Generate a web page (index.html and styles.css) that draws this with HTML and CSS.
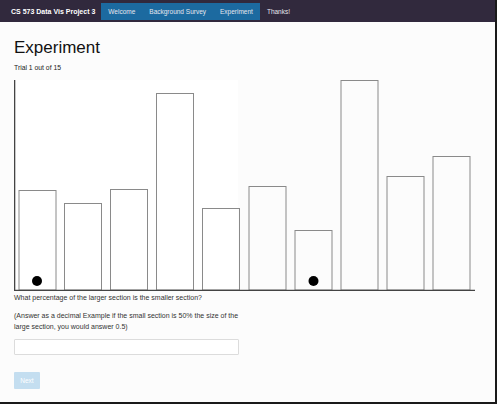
FILE: index.html
```html
<!DOCTYPE html>
<html>
<head>
<meta charset="utf-8">
<title>Experiment</title>
<link rel="stylesheet" href="styles.css">
</head>
<body>
<div class="frame">
  <nav class="navbar">
    <span class="brand">CS 573 Data Vis Project 3</span>
    <div class="nav-group">
      <a class="nav-link">Welcome</a>
      <a class="nav-link">Background Survey</a>
      <a class="nav-link">Experiment</a>
    </div>
    <a class="nav-link">Thanks!</a>
  </nav>
  <main class="content">
    <h1 class="title">Experiment</h1>
    <p class="trial">Trial 1 out of 15</p>
    <svg class="chart" width="462" height="211" viewBox="0 0 462 211">
      <rect x="0" y="0" width="224" height="210" fill="#ffffff"/>
      <g fill="none" stroke="#8a8a8a" stroke-width="1">
        <rect x="5" y="110.5" width="37" height="99.5"/>
        <rect x="50.5" y="123.5" width="37" height="86.5"/>
        <rect x="96.5" y="109.5" width="37" height="100.5"/>
        <rect x="142.5" y="13.5" width="37" height="196.5"/>
        <rect x="188.5" y="128.5" width="37" height="81.5"/>
        <rect x="235" y="106.5" width="37" height="103.5"/>
        <rect x="281" y="150.5" width="37" height="59.5"/>
        <rect x="327" y="0.5" width="37" height="209.5"/>
        <rect x="373" y="96.5" width="37" height="113.5"/>
        <rect x="419" y="76.5" width="37" height="133.5"/>
      </g>
      <g stroke="#444" stroke-width="1.3" fill="none">
        <line x1="0.65" y1="0" x2="0.65" y2="210.5"/>
        <line x1="0" y1="210.35" x2="461" y2="210.35"/>
      </g>
      <circle cx="23" cy="201" r="5" fill="#000"/>
      <circle cx="299.5" cy="201" r="5" fill="#000"/>
    </svg>
    <p class="question">What percentage of the larger section is the smaller section?</p>
    <p class="hint">(Answer as a decimal Example if the small section is 50% the size of the large section, you would answer 0.5)</p>
    <input class="answer" type="text">
    <button class="next" disabled>Next</button>
  </main>
</div>
</body>
</html>
```

FILE: styles.css
```css
html, body {
  margin: 0;
  padding: 0;
}
body {
  width: 497px;
  height: 404px;
  overflow: hidden;
  font-family: "Liberation Sans", Arial, Helvetica, sans-serif;
  color: #222;
}
.frame {
  box-sizing: border-box;
  width: 497px;
  height: 404px;
  background: #fcfcfc;
  border-right: 2px solid #1a1a1a;
  border-bottom: 2px solid #1a1a1a;
}
.navbar {
  height: 22px;
  background: #31293d;
  display: flex;
  align-items: center;
  padding-left: 11px;
  box-sizing: border-box;
}
.brand {
  color: #ffffff;
  font-weight: bold;
  font-size: 7px;
  margin-right: 6px;
  white-space: nowrap;
}
.nav-group {
  display: flex;
  background: #1c6aa0;
  height: 17px;
  margin-top: 1px;
  align-items: center;
}
.nav-link {
  color: #e6e6ee;
  font-size: 6.5px;
  padding: 0 7px;
  white-space: nowrap;
}
.content {
  padding: 0 14px;
}
.title {
  font-size: 17px;
  font-weight: normal;
  line-height: 20px;
  margin: 16px 0 0 0;
  color: #111;
}
.trial {
  font-size: 6.8px;
  line-height: 10px;
  margin: 5px 0 0 0;
  color: #222;
}
.chart {
  display: block;
  margin-top: 7px;
}
.question {
  font-size: 7px;
  line-height: 10px;
  margin: 2px 0 0 0;
  color: #333;
}
.hint {
  font-size: 7px;
  line-height: 11px;
  margin: 7px 0 0 0;
  width: 228px;
  color: #333;
}
.answer {
  display: block;
  box-sizing: border-box;
  width: 225px;
  height: 16px;
  margin: 7px 0 0 0;
  border: 1px solid #dcdcdc;
  border-radius: 1px;
  background: #ffffff;
  padding: 0;
}
.next {
  display: block;
  margin-top: 17px;
  width: 26px;
  height: 17px;
  border: none;
  border-radius: 1px;
  background: #c4def0;
  color: #ffffff;
  font-family: "Liberation Sans", Arial, sans-serif;
  font-size: 6.5px;
  padding: 0;
}
```
